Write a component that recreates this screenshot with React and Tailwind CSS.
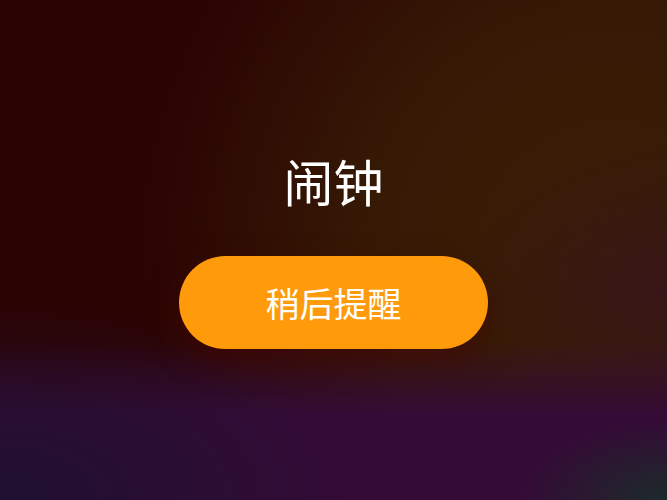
export default function App() {
  return (
    <div className="relative h-[500px] w-full overflow-hidden bg-[#2b0303] bg-[radial-gradient(ellipse_55%_40%_at_0%_100%,#1f1030_0%,transparent_100%),radial-gradient(ellipse_22%_16%_at_100%_100%,#1c2b2a_0%,transparent_100%),linear-gradient(to_bottom,transparent_68%,#340b36_83%),radial-gradient(ellipse_30%_30%_at_100%_58%,#381618_0%,transparent_100%),radial-gradient(ellipse_72%_100%_at_92%_52%,#3a1e05_0%,#361a05_50%,transparent_100%)] font-['Noto_Sans_CJK_SC','Noto_Sans_CJK_JP',sans-serif]">
      <div className="flex flex-col items-center pt-[155px]">
        <h1 className="text-[50px] leading-none font-normal text-white">闹钟</h1>
        <button className="mt-[51px] flex h-[93px] w-[309px] items-center justify-center rounded-full bg-[#ff9a0a] text-[34px] leading-none font-normal text-white shadow-[0_12px_30px_rgba(70,0,0,0.55)]">
          稍后提醒
        </button>
      </div>
    </div>
  );
}
